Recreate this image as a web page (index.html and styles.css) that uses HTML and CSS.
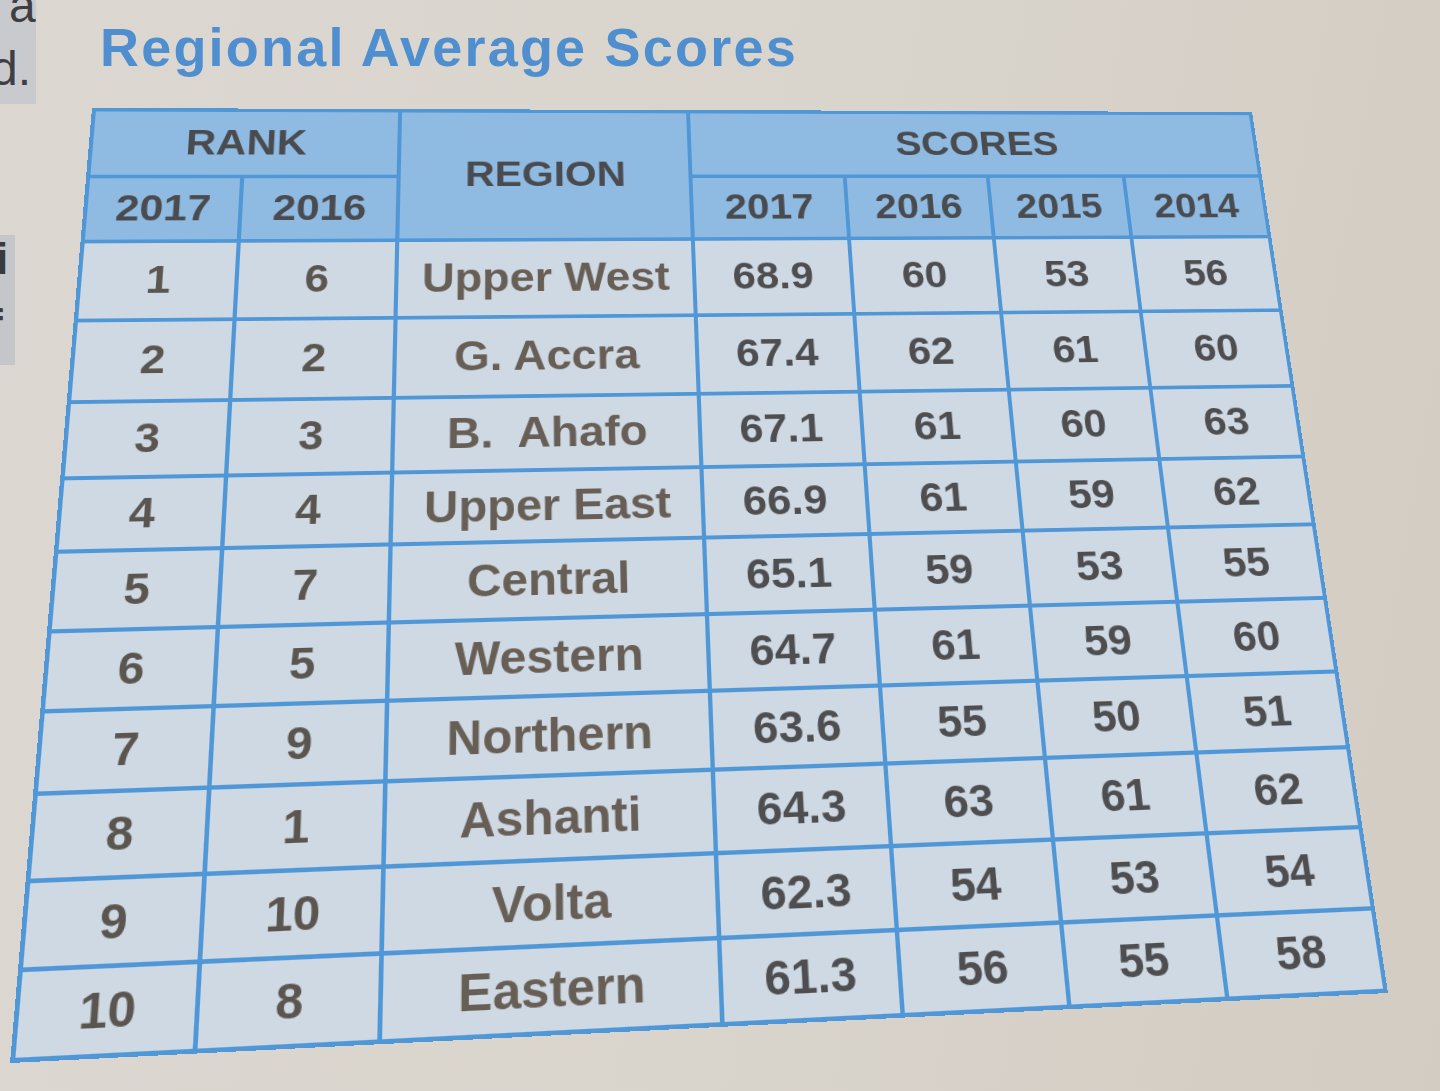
FILE: index.html
```html
<!DOCTYPE html>
<html lang="en">
<head>
<meta charset="utf-8">
<title>Regional Average Scores</title>
<link rel="stylesheet" href="styles.css">
</head>
<body>
<div class="page">
  <header class="top">
    <div class="edge-note"><span class="edge-a">a</span><span class="edge-d">d.</span></div>
    <h1 class="title">Regional Average Scores</h1>
  </header>
  <div class="main">
    <aside class="gutter">
      <div class="edge-marks"><span class="mark-i">i</span><span class="mark-f">f</span></div>
    </aside>
    <div class="sheet">
      <div class="grid">
        <div class="cell head rank-h">RANK</div>
        <div class="cell head region-h">REGION</div>
        <div class="cell head scores-h">SCORES</div>
        <div class="cell head">2017</div>
        <div class="cell head">2016</div>
        <div class="cell head">2017</div>
        <div class="cell head">2016</div>
        <div class="cell head">2015</div>
        <div class="cell head">2014</div>

        <div class="cell rank">1</div><div class="cell rank">6</div><div class="cell region">Upper West</div>
        <div class="cell score">68.9</div><div class="cell score">60</div><div class="cell score">53</div><div class="cell score">56</div>

        <div class="cell rank">2</div><div class="cell rank">2</div><div class="cell region">G. Accra</div>
        <div class="cell score">67.4</div><div class="cell score">62</div><div class="cell score">61</div><div class="cell score">60</div>

        <div class="cell rank">3</div><div class="cell rank">3</div><div class="cell region">B.&nbsp; Ahafo</div>
        <div class="cell score">67.1</div><div class="cell score">61</div><div class="cell score">60</div><div class="cell score">63</div>

        <div class="cell rank">4</div><div class="cell rank">4</div><div class="cell region">Upper East</div>
        <div class="cell score">66.9</div><div class="cell score">61</div><div class="cell score">59</div><div class="cell score">62</div>

        <div class="cell rank">5</div><div class="cell rank">7</div><div class="cell region">Central</div>
        <div class="cell score">65.1</div><div class="cell score">59</div><div class="cell score">53</div><div class="cell score">55</div>

        <div class="cell rank">6</div><div class="cell rank">5</div><div class="cell region">Western</div>
        <div class="cell score">64.7</div><div class="cell score">61</div><div class="cell score">59</div><div class="cell score">60</div>

        <div class="cell rank">7</div><div class="cell rank">9</div><div class="cell region">Northern</div>
        <div class="cell score">63.6</div><div class="cell score">55</div><div class="cell score">50</div><div class="cell score">51</div>

        <div class="cell rank">8</div><div class="cell rank">1</div><div class="cell region">Ashanti</div>
        <div class="cell score">64.3</div><div class="cell score">63</div><div class="cell score">61</div><div class="cell score">62</div>

        <div class="cell rank">9</div><div class="cell rank">10</div><div class="cell region">Volta</div>
        <div class="cell score">62.3</div><div class="cell score">54</div><div class="cell score">53</div><div class="cell score">54</div>

        <div class="cell rank">10</div><div class="cell rank">8</div><div class="cell region">Eastern</div>
        <div class="cell score">61.3</div><div class="cell score">56</div><div class="cell score">55</div><div class="cell score">58</div>
      </div>
    </div>
  </div>
</div>
</body>
</html>
```

FILE: styles.css
```css
* { box-sizing: border-box; }

html, body { margin: 0; padding: 0; }

body {
  width: 1440px;
  height: 1091px;
  overflow: hidden;
  background: linear-gradient(100deg, #dcd8d1 0%, #d9d4cc 55%, #d3ccc3 100%);
  font-family: "Liberation Sans", Arial, sans-serif;
}

.page {
  display: flex;
  flex-direction: column;
}

/* ---------- top strip ---------- */
.top {
  display: flex;
  height: 108px;
}

.edge-note {
  width: 36px;
  height: 104px;
  background: #c9cacd;
  overflow: hidden;
  display: flex;
  flex-direction: column;
  font-size: 48px;
  line-height: 1;
  color: #3f3f43;
  flex: none;
}

.edge-a {
  display: block;
  margin-top: -18px;
  padding-left: 9px;
}

.edge-d {
  display: block;
  margin-top: 15px;
  margin-left: -9px;
}

.title {
  margin: 20px 0 0 64px;
  font-size: 54px;
  line-height: 1;
  font-weight: bold;
  letter-spacing: 2.2px;
  color: #4f8fd0;
  white-space: nowrap;
}

/* ---------- main ---------- */
.main {
  display: flex;
}

.gutter {
  width: 92px;
  flex: none;
}

.edge-marks {
  margin-top: 127px;
  width: 15px;
  height: 130px;
  background: #c5c6c9;
  overflow: hidden;
  display: flex;
  flex-direction: column;
  font-size: 44px;
  font-weight: bold;
  line-height: 1;
  color: #3a3a3d;
}

.mark-i {
  display: block;
  margin-left: -4px;
  margin-top: 2px;
}

.mark-f {
  display: block;
  margin-left: -12px;
  margin-top: 22px;
}

/* The printed page is photographed at an angle: the flat table is
   mapped onto the photographed quadrilateral with a projective matrix. */
.sheet {
  width: 1200px;
  height: 920px;
  flex: none;
  transform-origin: 0 0;
  transform: matrix3d(1.035174, 0.0035696, 0, 0.000059058,
                      -0.0744065, 0.866564, 0, -0.00017956,
                      0, 0, 1, 0,
                      0, 0, 0, 1);
}

.grid {
  display: grid;
  width: 100%;
  height: 100%;
  padding: 4px;
  gap: 4px;
  background: #4f97d6;
  grid-template-columns: 148fr 153fr 297fr 159fr 150fr 145fr 148fr;
  grid-template-rows: 76fr 72fr 86fr 86fr 77fr 73fr 76fr 74fr 74fr 77fr 75fr 74fr;
}

.cell {
  display: flex;
  align-items: center;
  justify-content: center;
  background: #cfd9e3;
  font-weight: bold;
  font-size: 42px;
  line-height: 1;
  color: #4d4c4b;
  white-space: nowrap;
}

.head {
  background: #8fbae1;
  color: #4a4b4f;
  font-size: 41px;
}

.rank-h { grid-column: 1 / 3; }
.region-h { grid-column: 3; grid-row: 1 / 3; }
.scores-h { grid-column: 4 / 8; }

.rank { color: #5a554f; }

.region {
  font-size: 44px;
  color: #675e55;
}

.score { color: #4e4e50; }
```
